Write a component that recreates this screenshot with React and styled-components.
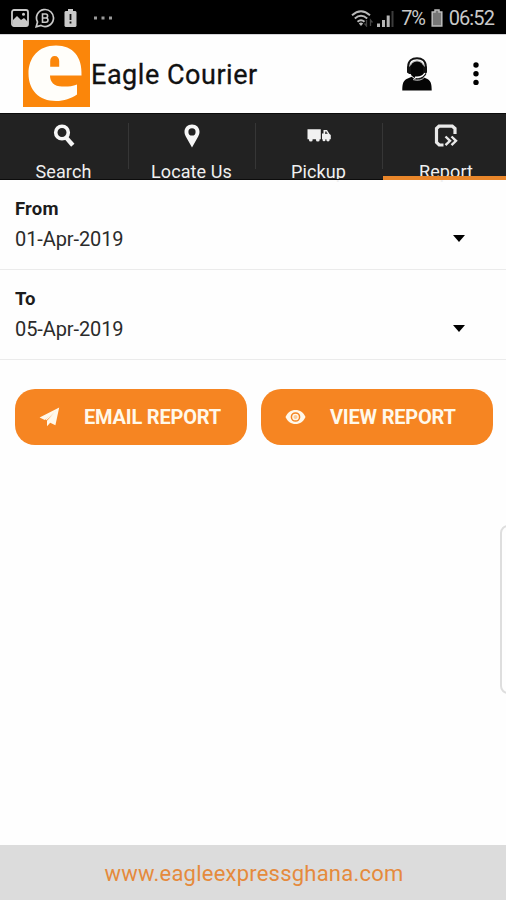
import React from "react";
import styled, { createGlobalStyle } from "styled-components";

const GlobalStyle = createGlobalStyle`
  * { box-sizing: border-box; }
  body { margin: 0; background: #fefefe; font-family: Roboto, sans-serif; }
`;

const Screen = styled.div`
  width: 506px;
  height: 900px;
  display: flex;
  flex-direction: column;
  position: relative;
  overflow: hidden;
  background: #fefefe;
`;

const StatusBar = styled.div`
  height: 34px;
  flex: none;
  padding: 2px 12px 0 11px;
  display: flex;
  align-items: center;
  justify-content: space-between;
  background: #000;
  color: #c9c9c9;
`;

const StatusGroup = styled.div`
  display: flex;
  align-items: center;
`;

const StatusIcon = styled.svg`
  display: block;
  flex: none;
  margin-left: ${(p) => p.$gap || 0}px;
`;

const StatusText = styled.span`
  font-size: 20px;
  line-height: 24px;
  margin-left: ${(p) => p.$gap}px;
  letter-spacing: ${(p) => p.$spacing}px;
  white-space: nowrap;
`;

const Header = styled.header`
  height: 79px;
  flex: none;
  padding: 0 20px 0 23px;
  display: flex;
  align-items: center;
  border-top: 1px solid #d4d4d8;
`;

const Logo = styled.svg`
  display: block;
  flex: none;
  margin-bottom: 2px;
`;

const Title = styled.h1`
  margin: 2px auto 0 1px;
  font-size: 27px;
  line-height: 32px;
  font-weight: 400;
  letter-spacing: 0.53px;
  color: #111;
  -webkit-text-stroke: 0.3px #111;
`;

const HeaderButton = styled.button`
  padding: 0;
  border: 0;
  background: none;
  display: block;
  margin-left: ${(p) => p.$gap || 0}px;

  svg { display: block; }
`;

const Tabs = styled.nav`
  height: 67px;
  flex: none;
  display: grid;
  grid-template-columns: 129px 127px 127px 123px;
  background: #222;
  border-top: 1px solid #0c0c0c;
`;

const Tab = styled.a`
  height: 66px;
  position: relative;
  display: flex;
  flex-direction: column;
  align-items: center;
  padding: 10px ${(p) => (p.$last ? 0 : 2)}px 0 ${(p) => (p.$last ? 3 : 0)}px;
  color: #f0f0f0;
  background: ${(p) =>
    p.$last ? "none" : "linear-gradient(#363636, #363636) right 9px / 1px 46px no-repeat"};

  svg { display: block; flex: none; }

  &::after {
    content: "";
    position: absolute;
    left: 0;
    right: 0;
    bottom: 0;
    height: ${(p) => (p.$active ? 4 : 1)}px;
    background: ${(p) => (p.$active ? "#e9862a" : "#0c0c0c")};
  }
`;

const TabLabel = styled.span`
  margin-top: 15px;
  font-size: 18px;
  line-height: 17px;
  white-space: nowrap;
  letter-spacing: 0.1px;
`;

const DateField = styled.div`
  height: 90px;
  flex: none;
  padding: 0 41px 0 15px;
  display: flex;
  justify-content: space-between;
  background: linear-gradient(#ebebeb, #ebebeb) 0 100% / 100% 1.5px no-repeat;
`;

const FieldText = styled.div`
  padding-top: 18px;
`;

const FieldLabel = styled.div`
  font-size: 18.5px;
  line-height: 22px;
  font-weight: 700;
  letter-spacing: 0.2px;
  color: #1c1c1c;
`;

const FieldValue = styled.div`
  margin-top: 7px;
  font-size: 20px;
  line-height: 24px;
  letter-spacing: -0.1px;
  color: #2b2b2b;
`;

const Caret = styled.span`
  margin-top: 55px;
  width: 12px;
  height: 7px;
  background: #000;
  clip-path: polygon(0 0, 100% 0, 50% 100%);
`;

const Actions = styled.div`
  display: grid;
  grid-template-columns: 232px 232px;
  column-gap: 14px;
  padding: 29px 0 0 14.5px;
`;

const ActionButton = styled.button`
  height: 56px;
  border: 0;
  padding: 0 0 0 24.5px;
  border-radius: 20px;
  background: #f68522;
  color: #fff8ea;
  display: flex;
  align-items: center;
  font: 700 20px/24px Roboto, sans-serif;
  letter-spacing: -0.2px;
  white-space: nowrap;

  svg { display: block; flex: none; margin-right: 24px; }
`;

const EdgeHandle = styled.div`
  position: absolute;
  left: 499.5px;
  top: 525px;
  width: 20px;
  height: 169px;
  border: 2px solid #dedede;
  border-radius: 8px;
`;

const Footer = styled.footer`
  height: 55px;
  flex: none;
  margin-top: auto;
  display: flex;
  align-items: center;
  justify-content: center;
  padding-top: 1px;
  padding-left: 2px;
  background: #dcdcdc;
  color: #e58a3c;
  font-size: 22px;
  letter-spacing: 0.22px;
`;

const PictureIcon = () => (
  <StatusIcon width="18" height="18" viewBox="0 0 18 18">
    <rect x="1" y="1" width="16" height="16" rx="2" fill="none" stroke="#c9c9c9" strokeWidth="1.8" />
    <path d="M2 16v-5l4-4 4 4 3-2 4 4v3z" fill="#c9c9c9" />
    <circle cx="12.5" cy="5.2" r="1.5" fill="#c9c9c9" />
  </StatusIcon>
);

const ChatIcon = () => (
  <StatusIcon $gap={6} width="20" height="20" viewBox="0 0 20 20">
    <path d="M1.2 18.8 2.5 14A8.5 8.5 0 1 1 6 17.5z" fill="none" stroke="#c9c9c9" strokeWidth="1.7" />
    <path d="M7.5 6h3.1a2 2 0 0 1 0 4H7.5zm0 4h3.4a2.1 2.1 0 0 1 0 4.2H7.5z" fill="none" stroke="#c9c9c9" strokeWidth="1.6" />
  </StatusIcon>
);

const BatteryAlertIcon = () => (
  <StatusIcon $gap={9} width="13" height="18" viewBox="0 0 13 18">
    <path d="M4 0h5v2h2.5l1 1v14l-1 1h-10l-1-1V3l1-1H4z" fill="#c9c9c9" />
    <path d="M6.5 5v6M6.5 12.5v2" stroke="#111" strokeWidth="1.8" />
  </StatusIcon>
);

const DotsIcon = () => (
  <StatusIcon $gap={16} width="20" height="4" viewBox="0 0 20 4">
    <path d="M1 .5h3v3H1zM8.5 .5h3v3h-3zM16 .5h3v3h-3z" fill="#999" />
  </StatusIcon>
);

const WifiIcon = () => (
  <StatusIcon width="22" height="17" viewBox="0 0 22 17">
    <path
      d="M1 5.2Q10 -2.8 19 5.2M3.8 8.5Q10 3 16.2 8.5M6.5 11.8Q10 8.6 13.5 11.8"
      fill="none"
      stroke="#b9b9b9"
      strokeWidth="1.9"
    />
    <path d="M7.8 13.4Q10 11.8 12.2 13.4L10 16z" fill="#b9b9b9" />
    <path d="M15.5 10v6l-2-2.5M19.5 16v-6l2 2.5" stroke="#444" fill="none" strokeWidth="1.3" />
  </StatusIcon>
);

const SignalIcon = () => (
  <StatusIcon $gap={4} width="18" height="17" viewBox="0 0 18 17">
    <path d="M0 13.5h3V17H0zM5 10h3v7H5zM9.7 5.5h3V17h-3z" fill="#b5b5b5" />
    <path d="M14.5 1h2v16h-2z" fill="#3c3c3c" />
  </StatusIcon>
);

const BatteryIcon = () => (
  <StatusIcon $gap={6} width="12" height="18" viewBox="0 0 12 18">
    <path d="M4 1h4v2h2.8v14H1.2V3H4z" fill="#777" stroke="#bdbdbd" strokeWidth="1.5" />
  </StatusIcon>
);

const BrandLogo = () => (
  <Logo width="67" height="67" viewBox="0 0 67 67">
    <rect width="67" height="67" fill="#fb860a" />
    <path
      fillRule="evenodd"
      fill="#fffefa"
      d="M33 5.500C15 5.500 5.500 18 5.500 33.500 5.500 50 16 61 33 61c8 0 15-2.500 21-6.500V44.500C49 46.500 44 46.700 39 46.500 31 46.500 27 42 27 35.500H58.500C59.500 17 50 5.500 33 5.500zM27.200 26.700V21c0-3 1.700-5 4.500-5s4.500 2 4.500 5v5.700z"
    />
  </Logo>
);

const AgentIcon = () => (
  <svg width="30" height="34" viewBox="0 0 30 34">
    <path d="M.3 33.500c0-7 .7-10.200 6-12.300l3.400-1.400c3 3.400 7.600 3.400 10.600 0l3.400 1.400c5.300 2.100 6 5.300 6 12.300z" fill="#050505" />
    <ellipse cx="15" cy="12.500" rx="7.500" ry="8.800" fill="#050505" />
    <path d="M6.200 13V9.500C6.200 4 10 1.200 15 1.200s8.800 2.800 8.800 8.300V13" fill="none" stroke="#111" strokeWidth="2" />
    <path d="M5 9.500h4V17H7.200L5 15.500zM25 9.500h-4V17h1.800l2.200-1.500z" fill="#111" />
    <path d="M8.500 8C10 5 12 4 15 4s5 1 6.500 4" fill="none" stroke="#bbb" strokeWidth="1.200" />
    <path d="M13 20.200q7 .9 10-4" fill="none" stroke="#fff" strokeWidth="1.600" />
    <path d="M13.500 21.700q7.500.8 10.500-5.200" fill="none" stroke="#111" strokeWidth="1.200" />
    <path d="M11 22.600q8 2.200 12-3" fill="none" stroke="#ddd" strokeWidth=".9" />
  </svg>
);

const MoreIcon = () => (
  <svg width="20" height="24" viewBox="0 0 20 24">
    <circle cx="10" cy="3" r="2.700" />
    <circle cx="10" cy="11.700" r="2.700" />
    <circle cx="10" cy="20.400" r="2.700" />
  </svg>
);

const SearchIcon = () => (
  <svg width="22" height="24" viewBox="0 0 22 24">
    <circle cx="9" cy="8.500" r="6.300" fill="none" stroke="#f6f6f6" strokeWidth="3.600" />
    <path d="m13.200 13.600 6.600 7.600" stroke="#f6f6f6" strokeWidth="4.400" />
  </svg>
);

const PinIcon = () => (
  <svg width="22" height="24" viewBox="0 0 22 24">
    <path
      fillRule="evenodd"
      fill="#f6f6f6"
      d="M11 .5C6.500 .5 3.500 3.700 3.500 7.800c0 1.800.5 3.200 1.300 4.700L11 23.500l6.200-11c.8-1.500 1.300-2.900 1.300-4.700C18.500 3.700 15.500.5 11 .5zm0 3.800a3.600 3.600 0 1 1 0 7.200 3.600 3.600 0 0 1 0-7.200z"
    />
  </svg>
);

const TruckIcon = () => (
  <svg width="24" height="24" viewBox="0 0 24 24">
    <path d="M.5 5.200h13.300v10H.5zM15 15.200V9.500h1.500V6H20l2.500 4 1.300 1v4.200z" fill="#f1f1f1" />
    <path d="M18 7.500h1.500l1.300 2.600H18z" fill="#555" />
    <g fill="#f1f1f1">
      <circle cx="3.800" cy="15.700" r="1.900" />
      <circle cx="10.800" cy="15.700" r="1.900" />
      <circle cx="17" cy="15.700" r="1.500" />
      <circle cx="21" cy="15.700" r="1.700" />
    </g>
  </svg>
);

const ReportIcon = () => (
  <svg width="24" height="24" viewBox="0 0 24 24">
    <path d="M9.500 21H5.200L2.500 18.300V4.500L5 2.200h13.300l2.700 2.300V10" fill="none" stroke="#e9e9e9" strokeWidth="3.200" />
    <path d="m11.500 12.500 4.500 4.300-4.500 4.300M17.500 12.500l4.500 4.300-4.500 4.300" fill="none" stroke="#e9e9e9" strokeWidth="2.400" />
  </svg>
);

const SendIcon = () => (
  <svg width="21" height="20" viewBox="0 0 21 20">
    <path d="M20.200.5.6 10.500l5.200 2.500L16.700 4.200 8 13.700V19.300l3.200-3.600 5.200 2.600z" fill="#fff8ea" />
    <path d="M7 12.700 16.500 4.500" stroke="#fff8ea" strokeWidth="1.200" />
  </svg>
);

const EyeIcon = () => (
  <svg width="21" height="16" viewBox="0 0 21 16">
    <path d="M.5 8C2.500 3.500 6 1 10.500 1s8 2.500 10 7c-2 4.500-5.500 7-10 7s-8-2.500-10-7z" fill="#fff8ea" />
    <circle cx="10.500" cy="8" r="4.100" fill="none" stroke="#f68522" strokeWidth="1.500" />
    <circle cx="10.500" cy="8" r="2" fill="#fbcb9a" />
  </svg>
);

const tabs = [
  { label: "Search", Icon: SearchIcon },
  { label: "Locate Us", Icon: PinIcon },
  { label: "Pickup", Icon: TruckIcon },
  { label: "Report", Icon: ReportIcon, active: true },
];

const fields = [
  { label: "From", value: "01-Apr-2019" },
  { label: "To", value: "05-Apr-2019" },
];

export default function App() {
  return (
    <>
      <GlobalStyle />
      <Screen>
        <StatusBar>
          <StatusGroup>
            <PictureIcon />
            <ChatIcon />
            <BatteryAlertIcon />
            <DotsIcon />
          </StatusGroup>
          <StatusGroup>
            <WifiIcon />
            <SignalIcon />
            <StatusText $gap={6} $spacing={-1.2}>7%</StatusText>
            <BatteryIcon />
            <StatusText $gap={6} $spacing={-0.9}>06:52</StatusText>
          </StatusGroup>
        </StatusBar>
        <Header>
          <BrandLogo />
          <Title>Eagle Courier</Title>
          <HeaderButton aria-label="Support"><AgentIcon /></HeaderButton>
          <HeaderButton aria-label="More" $gap={34}><MoreIcon /></HeaderButton>
        </Header>
        <Tabs>
          {tabs.map(({ label, Icon, active }, i) => (
            <Tab key={label} $active={active} $last={i === tabs.length - 1}>
              <Icon />
              <TabLabel>{label}</TabLabel>
            </Tab>
          ))}
        </Tabs>
        {fields.map((f) => (
          <DateField key={f.label}>
            <FieldText>
              <FieldLabel>{f.label}</FieldLabel>
              <FieldValue>{f.value}</FieldValue>
            </FieldText>
            <Caret />
          </DateField>
        ))}
        <Actions>
          <ActionButton><SendIcon />EMAIL REPORT</ActionButton>
          <ActionButton><EyeIcon />VIEW REPORT</ActionButton>
        </Actions>
        <EdgeHandle />
        <Footer>www.eagleexpressghana.com</Footer>
      </Screen>
    </>
  );
}
